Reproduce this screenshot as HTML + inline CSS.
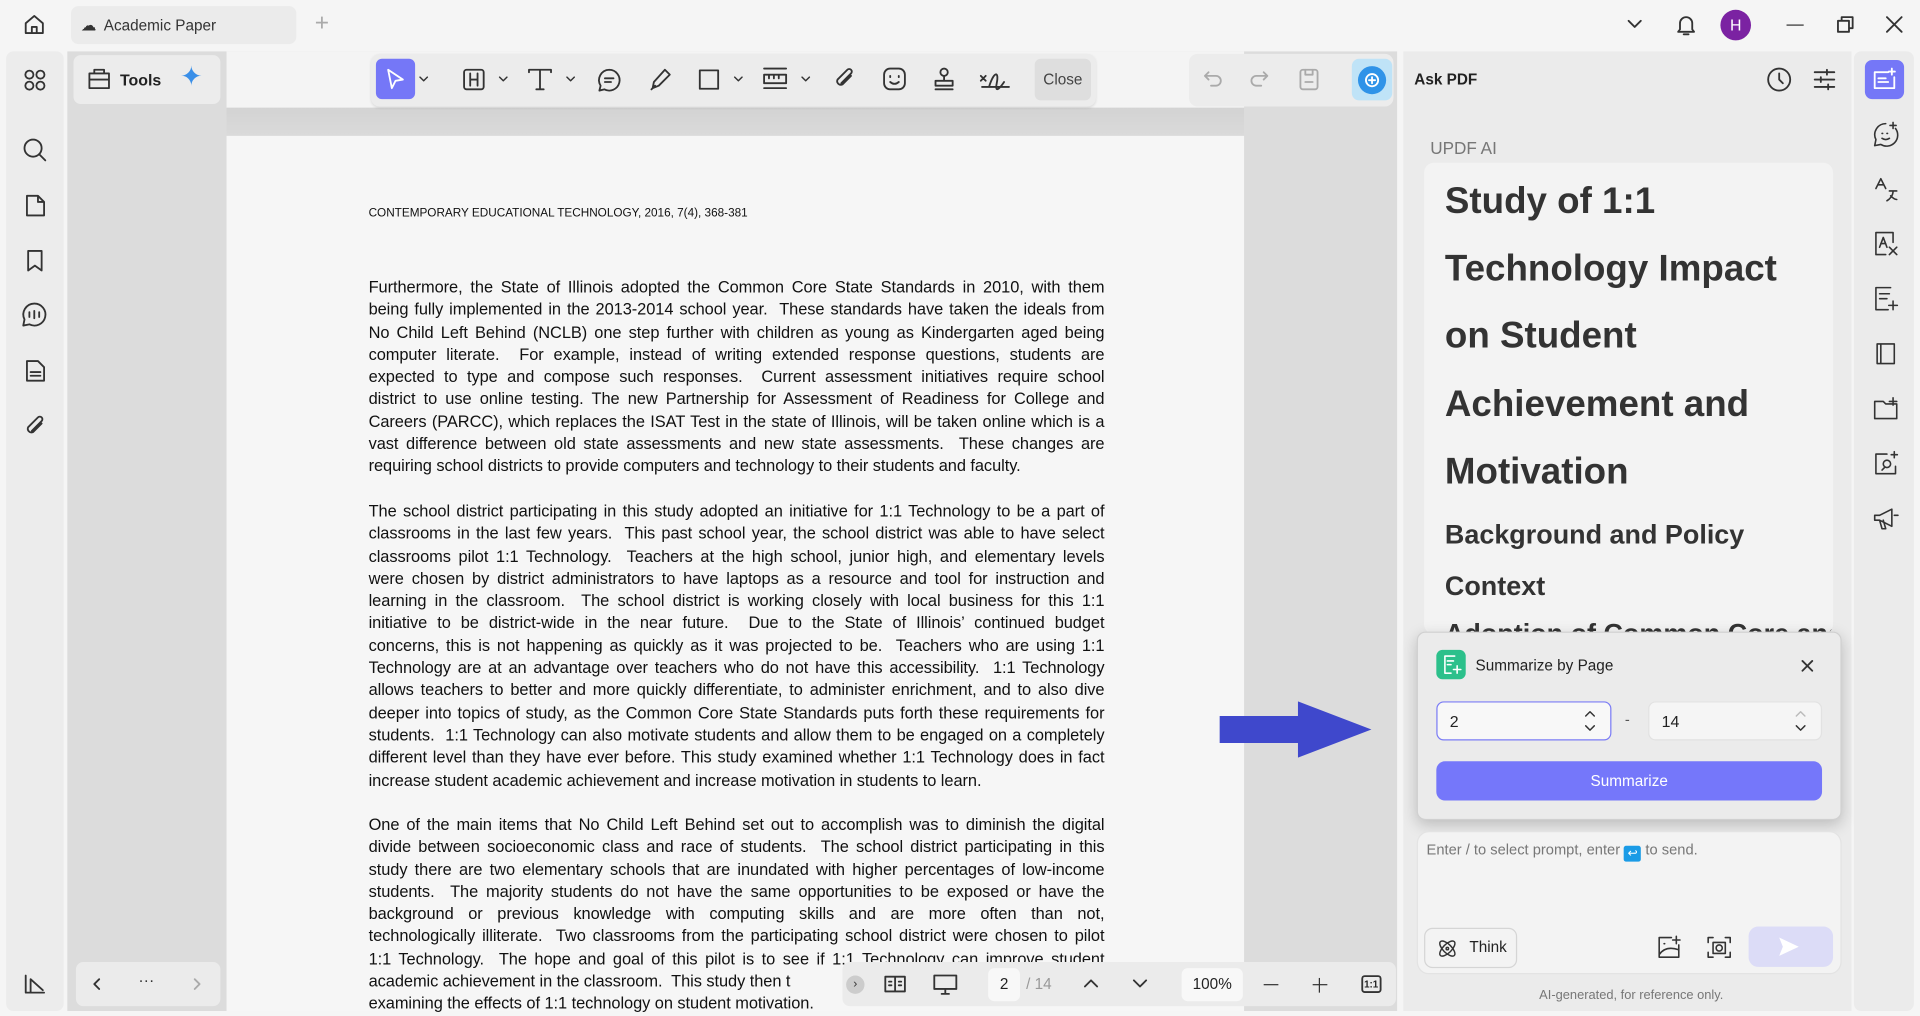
<!DOCTYPE html><html><head><meta charset="utf-8"><style>
*{box-sizing:border-box;margin:0;padding:0}
body{width:1920px;height:1011px;overflow:hidden;background:#f5f5f5;font-family:"Liberation Sans",sans-serif;color:#222}
#w{position:absolute;left:0;top:0;width:1568px;height:826px;transform:scale(1.22449,1.22397);transform-origin:0 0;background:#f5f5f5}
.a{position:absolute}
.ic{position:absolute;fill:none;stroke:#333;stroke-width:1.5;stroke-linecap:round;stroke-linejoin:round}
.doc div{text-align:justify;text-align-last:justify;white-space:nowrap;height:18.3px;line-height:18.3px}
.doc div.l{text-align-last:left}
.doc{position:absolute;left:301px;width:601px;font-size:13.4px;color:#111;letter-spacing:-0.05px}
.h{position:absolute;left:1180px;font-weight:bold;color:#333;font-size:30px;white-space:nowrap}
</style></head><body><div id="w">
<svg class="ic" style="left:18px;top:10px" width="20" height="20" viewBox="0 0 20 20"><path d="M3 9L10 3l7 6v8H3z M8 17v-5h4v5"/></svg>
<div class="a" style="left:58px;top:5px;width:184px;height:31px;background:#ebebeb;border-radius:6px"></div>
<div class="a" style="left:66px;top:13px;font-size:12.5px;color:#333">☁&nbsp; Academic Paper</div>
<div class="a" style="left:257px;top:8px;font-size:20px;color:#aaa;font-weight:300">+</div>
<svg class="ic" style="left:1328px;top:14px" width="14" height="12"><path d="M2 3l5 5 5-5"/></svg>
<svg class="ic" style="left:1368px;top:10px" width="18" height="20"><path d="M4 14V9a5 5 0 0110 0v5l1.5 2h-13z M7 18h4"/></svg>
<div class="a" style="left:1405px;top:8px;width:25px;height:25px;border-radius:50%;background:#7b22a2;color:#fff;font-size:13px;text-align:center;line-height:25px">H</div>
<div class="a" style="left:1459px;top:20px;width:14px;height:1.4px;background:#333"></div>
<svg class="ic" style="left:1499px;top:12px" width="16" height="16"><path d="M2 5h9v9H2z M5 5V2h9v9h-3"/></svg>
<svg class="ic" style="left:1540px;top:13px" width="14" height="14"><path d="M1 1l12 12M13 1L1 13"/></svg>
<div class="a" style="left:5px;top:42px;width:47px;height:784px;background:#ececec;border-radius:6px"></div>
<svg class="ic" style="left:19px;top:56px" width="19" height="19"><circle cx="5" cy="5" r="3.3"/><circle cx="14" cy="5" r="3.3"/><circle cx="5" cy="14" r="3.3"/><circle cx="14" cy="14" r="3.3"/></svg>
<svg class="ic" style="left:18px;top:112px" width="21" height="21"><circle cx="9" cy="9" r="7"/><path d="M14 14l5 5"/></svg>
<svg class="ic" style="left:19px;top:158px" width="19" height="20"><path d="M3 2h9l5 5v11H3z M12 2v5h5"/></svg>
<svg class="ic" style="left:20px;top:203px" width="17" height="20"><path d="M3 2h11v16l-5.5-4L3 18z"/></svg>
<svg class="ic" style="left:17px;top:246px" width="22" height="22"><path d="M11 2a9 9 0 00-8 13l-1 5 5-1a9 9 0 104-17z M7 9v4M11 8v6M15 9v4"/></svg>
<svg class="ic" style="left:19px;top:293px" width="19" height="20"><path d="M3 2h9l5 5v11H3z M6 11h8M6 14h8"/></svg>
<svg class="ic" style="left:19px;top:338px" width="20" height="20"><path d="M15 8l-7 7a3 3 0 01-4-4l8-8a2 2 0 013 3l-8 8"/></svg>
<svg class="ic" style="left:19px;top:795px" width="20" height="18"><path d="M2 2v14h15 M6 16V5l10 9"/></svg>
<div class="a" style="left:55px;top:42px;width:1086px;height:784px;background:#dcdcdc"></div>
<div class="a" style="left:185px;top:42px;width:831px;height:46px;background:#f4f4f4"></div>
<div class="a" style="left:185px;top:88px;width:831px;height:23px;background:linear-gradient(#d3d3d3,#dadada)"></div>
<div class="a" style="left:185px;top:111px;width:831px;height:715px;background:#f6f6f6"></div>
<div class="a" style="left:60px;top:45px;width:120px;height:40px;background:#ececec;border-radius:6px"></div>
<svg class="ic" style="left:71px;top:54px" width="20" height="20"><path d="M2 6h16v12H2z M6 6V3h8v3 M2 11h16"/></svg>
<div class="a" style="left:98px;top:58px;font-size:13px;font-weight:bold">Tools</div>
<div class="a" style="left:147px;top:50px;font-size:22px;color:#3a8fe8">✦</div>
<div class="a" style="left:303px;top:44px;width:592px;height:43px;background:#ececec;border-radius:7px;box-shadow:0 1px 2px rgba(0,0,0,.1)"></div>
<div class="a" style="left:307px;top:48px;width:32px;height:33px;background:#7577f7;border-radius:5px"></div>
<svg class="ic" style="left:313px;top:55px;stroke:#fff" width="20" height="20"><path d="M4 2l12 8-6 1-3 6z"/></svg>
<svg class="ic" style="left:342px;top:62px;stroke-width:1.2" width="8" height="6"><path d="M1 1l3 3 3-3"/></svg>
<svg class="ic" style="left:407px;top:62px;stroke-width:1.2" width="8" height="6"><path d="M1 1l3 3 3-3"/></svg>
<svg class="ic" style="left:462px;top:62px;stroke-width:1.2" width="8" height="6"><path d="M1 1l3 3 3-3"/></svg>
<svg class="ic" style="left:599px;top:62px;stroke-width:1.2" width="8" height="6"><path d="M1 1l3 3 3-3"/></svg>
<svg class="ic" style="left:654px;top:62px;stroke-width:1.2" width="8" height="6"><path d="M1 1l3 3 3-3"/></svg>
<svg class="ic" style="left:1089px;top:62px;stroke-width:1.2;stroke:#777" width="8" height="6"><path d="M1 1l3 3 3-3"/></svg>
<svg class="ic" style="left:377px;top:55px" width="20" height="20"><rect x="2" y="2" width="16" height="16" rx="2"/><path d="M7 5v10M13 5v10M7 10h6"/></svg>
<svg class="ic" style="left:430px;top:55px" width="22" height="20"><path d="M2 4V2h18v2 M11 2v16 M8 18h6"/></svg>
<svg class="ic" style="left:487px;top:55px" width="21" height="21"><path d="M10.5 2a8.5 8.5 0 00-7 13l-1 4 4-1a8.5 8.5 0 104-16z M7 9h7M7 12h5"/></svg>
<svg class="ic" style="left:529px;top:55px" width="20" height="20"><path d="M14 2l4 4-9 9-5 2 1-5z M3 18l3-3"/></svg>
<svg class="ic" style="left:570px;top:56px" width="18" height="18"><rect x="1.5" y="1.5" width="15" height="15"/></svg>
<svg class="ic" style="left:622px;top:54px" width="22" height="20"><path d="M2 2h18 M2 18h18 M2 7h18v7H2z M6 7v3M10 7v3M14 7v3"/></svg>
<svg class="ic" style="left:680px;top:55px" width="20" height="20"><path d="M15 7l-7 7a3 3 0 01-4-4l8-8a2 2 0 013 3l-8 8"/></svg>
<svg class="ic" style="left:720px;top:54px" width="21" height="21"><rect x="2" y="2" width="17" height="17" rx="5"/><path d="M7 8v1M14 8v1M7 13q3.5 3 7 0"/></svg>
<svg class="ic" style="left:761px;top:54px" width="20" height="21"><circle cx="10" cy="5" r="3"/><path d="M10 8v4 M3 12h14v4H3z M3 19h14"/></svg>
<svg class="ic" style="left:799px;top:54px" width="28" height="20"><path d="M2 8l4 4M6 8l-4 4 M9 16c4-12 8-12 6-2s4 2 6-1 M3 17h22"/></svg>
<div class="a" style="left:845px;top:48px;width:46px;height:34px;background:#dedede;border-radius:5px;font-size:12.5px;color:#444;text-align:center;line-height:34px">Close</div>
<div class="a" style="left:971px;top:44px;width:167px;height:43px;background:#ececec;border-radius:7px"></div>
<svg class="ic" style="left:982px;top:56px;stroke:#aaa" width="18" height="16"><path d="M5 3L2 6l3 3 M2 6h9a4 4 0 010 8H7"/></svg>
<svg class="ic" style="left:1019px;top:56px;stroke:#aaa" width="18" height="16"><path d="M13 3l3 3-3 3 M16 6H7a4 4 0 000 8h4"/></svg>
<svg class="ic" style="left:1060px;top:55px;stroke:#aaa" width="18" height="20"><rect x="2" y="2" width="14" height="16" rx="2"/><path d="M6 2v4h6V2 M6 12h6"/></svg>
<div class="a" style="left:1104px;top:48px;width:33px;height:34px;background:#bfe3f7;border-radius:6px"></div>
<div class="a" style="left:1109px;top:54px;width:23px;height:23px;border-radius:50%;background:#2f93e8"></div>
<svg class="ic" style="left:1112px;top:57px;stroke:#fff" width="17" height="17"><circle cx="8.5" cy="8.5" r="5"/><path d="M8.5 6v5M6 8.5h5"/></svg>
<div class="a" style="left:301px;top:169px;font-size:9.6px;color:#111">CONTEMPORARY EDUCATIONAL TECHNOLOGY, 2016, 7(4), 368-381</div>
<div class="doc" style="top:226px">
<div>Furthermore, the State of Illinois adopted the Common Core State Standards in 2010, with them</div>
<div>being fully implemented in the 2013-2014 school year.&nbsp; These standards have taken the ideals from</div>
<div>No Child Left Behind (NCLB) one step further with children as young as Kindergarten aged being</div>
<div>computer literate.&nbsp; For example, instead of writing extended response questions, students are</div>
<div>expected to type and compose such responses.&nbsp; Current assessment initiatives require school</div>
<div>district to use online testing. The new Partnership for Assessment of Readiness for College and</div>
<div>Careers (PARCC), which replaces the ISAT Test in the state of Illinois, will be taken online which is a</div>
<div>vast difference between old state assessments and new state assessments.&nbsp; These changes are</div>
<div class="l">requiring school districts to provide computers and technology to their students and faculty.</div>
</div>
<div class="doc" style="top:409px">
<div>The school district participating in this study adopted an initiative for 1:1 Technology to be a part of</div>
<div>classrooms in the last few years.&nbsp; This past school year, the school district was able to have select</div>
<div>classrooms pilot 1:1 Technology.&nbsp; Teachers at the high school, junior high, and elementary levels</div>
<div>were chosen by district administrators to have laptops as a resource and tool for instruction and</div>
<div>learning in the classroom.&nbsp; The school district is working closely with local business for this 1:1</div>
<div>initiative to be district-wide in the near future.&nbsp; Due to the State of Illinois’ continued budget</div>
<div>concerns, this is not happening as quickly as it was projected to be.&nbsp; Teachers who are using 1:1</div>
<div>Technology are at an advantage over teachers who do not have this accessibility.&nbsp; 1:1 Technology</div>
<div>allows teachers to better and more quickly differentiate, to administer enrichment, and to also dive</div>
<div>deeper into topics of study, as the Common Core State Standards puts forth these requirements for</div>
<div>students.&nbsp; 1:1 Technology can also motivate students and allow them to be engaged on a completely</div>
<div>different level than they have ever before. This study examined whether 1:1 Technology does in fact</div>
<div class="l">increase student academic achievement and increase motivation in students to learn.</div>
</div>
<div class="doc" style="top:665px">
<div>One of the main items that No Child Left Behind set out to accomplish was to diminish the digital</div>
<div>divide between socioeconomic class and race of students.&nbsp; The school district participating in this</div>
<div>study there are two elementary schools that are inundated with higher percentages of low-income</div>
<div>students.&nbsp; The majority students do not have the same opportunities to be exposed or have the</div>
<div>background or previous knowledge with computing skills and are more often than not,</div>
<div>technologically illiterate.&nbsp; Two classrooms from the participating school district were chosen to pilot</div>
<div>1:1 Technology.&nbsp; The hope and goal of this pilot is to see if 1:1 Technology can improve student</div>
<div class="l">academic achievement in the classroom.&nbsp; This study then t</div>
<div class="l">examining the effects of 1:1 technology on student motivation.</div>
</div>
<div class="a" style="left:62px;top:786px;width:118px;height:36px;background:#ebebeb;border-radius:6px"></div>
<svg class="ic" style="left:73px;top:798px" width="12" height="12"><path d="M8 2L4 6l4 4"/></svg>
<div class="a" style="left:113px;top:793px;font-size:13px;color:#333">···</div>
<svg class="ic" style="left:155px;top:798px;stroke:#aaa" width="12" height="12"><path d="M4 2l4 4-4 4"/></svg>
<div class="a" style="left:688px;top:786px;width:452px;height:36px;background:#ebebeb;border-radius:6px"></div>
<div class="a" style="left:691px;top:797px;width:15px;height:15px;border-radius:50%;background:#ccc;font-size:10px;text-align:center;line-height:15px;color:#333">›</div>
<svg class="ic" style="left:721px;top:796px" width="20" height="16"><path d="M2 2h16v12H2z M10 2v12 M5 6h2M5 9h2M13 6h2M13 9h2"/></svg>
<svg class="ic" style="left:761px;top:795px" width="22" height="18"><path d="M2 2h18v11H2z M8 17h6 M11 13v4"/></svg>
<div class="a" style="left:807px;top:791px;width:26px;height:27px;background:#f8f8f8;border-radius:5px;font-size:12.5px;text-align:center;line-height:27px">2</div>
<div class="a" style="left:838px;top:797px;font-size:12.5px;color:#999">/ 14</div>
<svg class="ic" style="left:884px;top:798px" width="14" height="10"><path d="M2 8l5-5 5 5"/></svg>
<svg class="ic" style="left:924px;top:799px" width="14" height="10"><path d="M2 2l5 5 5-5"/></svg>
<div class="a" style="left:965px;top:791px;width:50px;height:27px;background:#f8f8f8;border-radius:5px;font-size:12.5px;text-align:center;line-height:27px">100%</div>
<div class="a" style="left:1032px;top:804px;width:12px;height:1.4px;background:#333"></div>
<div class="a" style="left:1072px;top:804px;width:12px;height:1.4px;background:#333"></div>
<div class="a" style="left:1077px;top:799px;width:1.4px;height:12px;background:#333"></div>
<svg class="ic" style="left:1111px;top:796px" width="18" height="16"><rect x="1.5" y="1.5" width="15" height="13" rx="2"/></svg>
<div class="a" style="left:1114px;top:800px;font-size:8px;font-weight:bold">1:1</div>
<svg class="a" style="left:996px;top:573px" width="130" height="46"><path d="M0 12h64V0l60 23-60 23V34H0z" fill="#3f48cc"/></svg>
<div class="a" style="left:1146px;top:42px;width:366px;height:784px;background:#ebebeb"></div>
<div class="a" style="left:1155px;top:58px;font-size:12.5px;font-weight:bold">Ask PDF</div>
<svg class="ic" style="left:1442px;top:54px" width="22" height="22"><circle cx="11" cy="11" r="9"/><path d="M11 6v5l3 3"/></svg>
<svg class="ic" style="left:1480px;top:55px" width="20" height="20"><path d="M2 4h16M2 10h16M2 16h16 M12 2v4M7 8v4M13 14v4"/></svg>
<div class="a" style="left:1168px;top:113px;font-size:14px;color:#777">UPDF AI</div>
<div class="a" style="left:1163px;top:133px;width:334px;height:385px;background:#f3f3f3;border-radius:8px;overflow:hidden">
<div class="h" style="left:17px;top:15px">Study of 1:1</div>
<div class="h" style="left:17px;top:70px">Technology Impact</div>
<div class="h" style="left:17px;top:125px">on Student</div>
<div class="h" style="left:17px;top:181px">Achievement and</div>
<div class="h" style="left:17px;top:236px">Motivation</div>
<div class="h" style="left:17px;top:291px;font-size:22px">Background and Policy</div>
<div class="h" style="left:17px;top:333px;font-size:22px">Context</div>
<div class="h" style="left:17px;top:372px;font-size:22px">Adoption of Common Core and</div>
</div>
<div class="a" style="left:1157px;top:516px;width:347px;height:154px;background:#ebebeb;border:1px solid #d0d0d0;border-radius:7px;box-shadow:0 4px 12px rgba(0,0,0,.2)"></div>
<div class="a" style="left:1173px;top:531px;width:24px;height:24px;background:#2cc08b;border-radius:5px"></div>
<svg class="ic" style="left:1176px;top:534px;stroke:#fff;stroke-width:1.3" width="18" height="18"><path d="M12 2H4v14h5 M6 6h5M6 9h3 M14 10v6M11 13h6"/></svg>
<div class="a" style="left:1205px;top:537px;font-size:12.5px;color:#222">Summarize by Page</div>
<svg class="ic" style="left:1471px;top:539px" width="10" height="10"><path d="M1 1l8 8M9 1L1 9"/></svg>
<div class="a" style="left:1173px;top:573px;width:143px;height:32px;background:#f8f8f8;border:1.2px solid #7b7cf5;border-radius:6px"></div>
<div class="a" style="left:1184px;top:582px;font-size:13px">2</div>
<svg class="ic" style="left:1294px;top:580px;stroke-width:1.2" width="9" height="18"><path d="M1 5l3.5-3.5L8 5 M1 13l3.5 3.5L8 13"/></svg>
<div class="a" style="left:1327px;top:581px;font-size:12px;color:#555">-</div>
<div class="a" style="left:1346px;top:573px;width:142px;height:32px;background:#f5f5f5;border:1px solid #e2e2e2;border-radius:6px"></div>
<div class="a" style="left:1357px;top:582px;font-size:13px">14</div>
<svg class="ic" style="left:1466px;top:580px;stroke-width:1.2" width="9" height="18"><path d="M1 5l3.5-3.5L8 5" stroke="#bbb"/><path d="M1 13l3.5 3.5L8 13"/></svg>
<div class="a" style="left:1173px;top:622px;width:315px;height:32px;background:#7577fa;border-radius:7px;color:#fff;font-size:12.5px;text-align:center;line-height:32px">Summarize</div>
<div class="a" style="left:1157px;top:679px;width:347px;height:117px;background:#f3f3f3;border:1px solid #e3e3e3;border-radius:10px"></div>
<div class="a" style="left:1165px;top:687px;font-size:12px;color:#777">Enter / to select prompt, enter <span style="display:inline-block;width:14px;height:13px;background:#1a9be6;border-radius:2px;color:#fff;font-size:10px;text-align:center;line-height:13px;vertical-align:-2px">↩</span> to send.</div>
<div class="a" style="left:1163px;top:758px;width:76px;height:33px;border:1px solid #d5d5d5;border-radius:7px;background:#f3f3f3"></div>
<svg class="ic" style="left:1173px;top:766px;stroke-width:1.2" width="18" height="18"><ellipse cx="9" cy="9" rx="8" ry="3.5" transform="rotate(45 9 9)"/><ellipse cx="9" cy="9" rx="8" ry="3.5" transform="rotate(-45 9 9)"/><circle cx="9" cy="9" r="1"/></svg>
<div class="a" style="left:1200px;top:767px;font-size:12.5px">Think</div>
<svg class="ic" style="left:1352px;top:763px;stroke-width:1.3" width="22" height="22"><path d="M13 3H3v16h16V9 M3 17c4-6 10-6 16-4 M17 2v6M14 5h6 M7 8h.5"/></svg>
<svg class="ic" style="left:1393px;top:764px;stroke-width:1.3" width="22" height="20"><path d="M2 6V2h4M16 2h4v4M20 14v4h-4M6 18H2v-4 M6 6h10v9H6z"/><circle cx="11" cy="10.5" r="2.5"/></svg>
<div class="a" style="left:1428px;top:757px;width:69px;height:33px;background:#dcdcf7;border-radius:8px"></div>
<svg class="a" style="left:1452px;top:765px" width="18" height="17"><path d="M1 1l16 7.5L1 16l3-7.5z" fill="#fff"/></svg>
<div class="a" style="left:1257px;top:807px;font-size:10.5px;color:#777">AI-generated, for reference only.</div>
<div class="a" style="left:1514px;top:42px;width:49px;height:784px;background:#ebebeb;border-radius:6px"></div>
<div class="a" style="left:1523px;top:49px;width:32px;height:32px;background:#7577f7;border-radius:6px"></div>
<svg class="ic" style="left:1528px;top:54px;stroke:#fff" width="22" height="22"><path d="M3 5h11M3 5v13h16V9 M6 10h6M6 13h8 M17 2v5M14.5 4.5h5"/></svg>
<svg class="ic" style="left:1529px;top:99px;stroke-width:1.3" width="22" height="22"><path d="M11 2a9 9 0 00-8 13l-1 5 5-1a9 9 0 0012-13 M8 10h.5M12 10h.5 M8 14q3 2 6 0 M17 1v5M14.5 3.5h5"/></svg>
<svg class="ic" style="left:1529px;top:144px;stroke-width:1.3" width="22" height="22"><path d="M3 10l4-8 4 8M4.5 7h5 M14 12h6 M17 12c0 4-3 7-5 8 M15 16c2 2 4 3 5 3"/></svg>
<svg class="ic" style="left:1529px;top:188px;stroke-width:1.3" width="22" height="22"><path d="M3 2h14v8 M3 2v18h8 M6 14l3-8 3 8M7 11h4 M14 14l6 6M20 14l-6 6"/></svg>
<svg class="ic" style="left:1529px;top:233px;stroke-width:1.3" width="22" height="22"><path d="M15 2H3v18h10 M6 7h8M6 11h6 M17 13v7M13.5 16.5h7"/></svg>
<svg class="ic" style="left:1529px;top:278px;stroke-width:1.3" width="22" height="22"><path d="M4 3h14v16H4z M7 3v16 M4 19h14"/></svg>
<svg class="ic" style="left:1529px;top:323px;stroke-width:1.3" width="22" height="22"><path d="M2 5h7l2 2h9v12H2z M17 2v6M14 5h6"/></svg>
<svg class="ic" style="left:1529px;top:368px;stroke-width:1.3" width="22" height="22"><path d="M12 3H3v16h16v-6 M10 14l-2 2"/><circle cx="12" cy="11" r="3"/><path d="M18 1v5M15.5 3.5h5"/></svg>
<svg class="ic" style="left:1529px;top:413px;stroke-width:1.3" width="22" height="22"><path d="M2 8h4l10-5v14L6 12H2z M6 12l2 7h3l-2-7 M18 8h3"/></svg>
</div></body></html>
